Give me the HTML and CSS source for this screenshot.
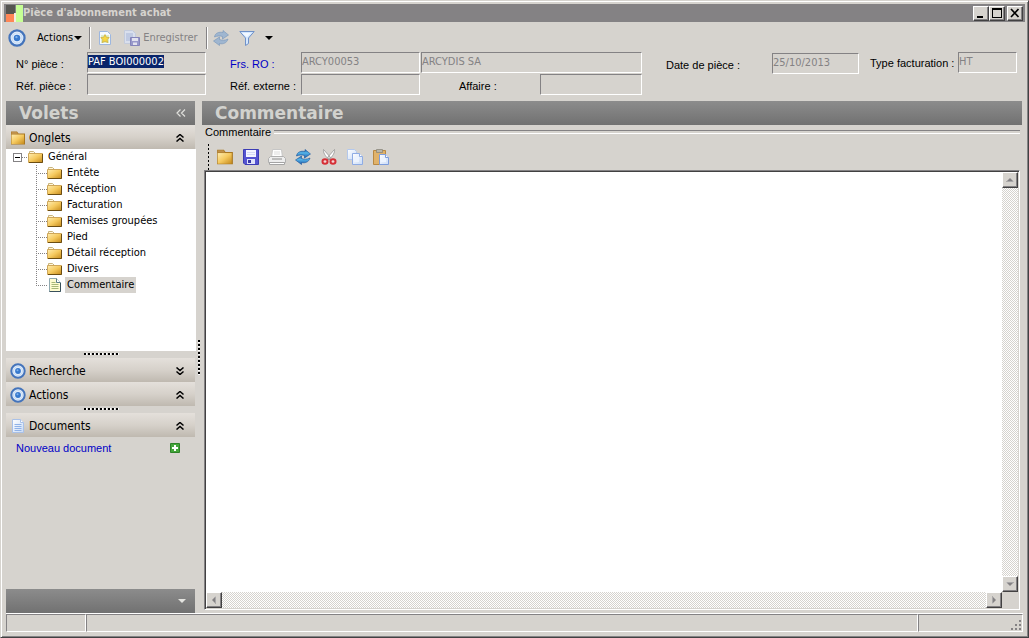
FILE: index.html
```html
<!DOCTYPE html>
<html lang="fr">
<head>
<meta charset="utf-8">
<title>Pièce d'abonnement achat</title>
<link rel="stylesheet" href="styles.css">
</head>
<body>
<svg class="defs" width="0" height="0" aria-hidden="true">
  <defs>
    <linearGradient id="gold" x1="0" y1="0" x2="1" y2="1"><stop offset="0" stop-color="#ffedb0"/><stop offset=".5" stop-color="#f5c95e"/><stop offset="1" stop-color="#c58a1c"/></linearGradient>
    <linearGradient id="sheet" x1="0" y1="0" x2="1" y2="1"><stop offset="0" stop-color="#fff"/><stop offset="1" stop-color="#c9dbf6"/></linearGradient>
    <linearGradient id="wave" x1="0" y1="0" x2="0" y2="1"><stop offset="0" stop-color="#1c62ae"/><stop offset=".4" stop-color="#56b4e8"/><stop offset="1" stop-color="#1a5cae"/></linearGradient>
    <symbol id="folder" viewBox="0 0 16 16"><path d="M1.500 4V2.500h4L7 4" fill="#fff7dc" stroke="#c9b47e"/><path d="M.5 4.500h14v9H.5z" fill="url(#gold)" stroke="#cfa75a"/><path d="M1 13.500h13.500V5" fill="none" stroke="#6b4d12"/></symbol>
    <symbol id="bigfolder" viewBox="0 0 16 16"><path d="M1 1.500h6L8.500 3.500H15v11H1z" fill="#a97720"/><path d="M1.500 2h5L8 4H1.500z" fill="#c0914a"/><path d="M1.500 4.500h12.500v9.500H1.500z" fill="url(#gold)"/></symbol>
    <symbol id="target" viewBox="0 0 16 16"><circle cx="8" cy="8" r="6.700" fill="#e4eefb" stroke="#4474bb" stroke-width="2"/><circle cx="8" cy="8" r="4.500" fill="none" stroke="#c4dbf4"/><circle cx="8" cy="8" r="2.900" fill="#3779cd"/><circle cx="7.500" cy="7.300" r="1" fill="#7fb2ec"/></symbol>
    <symbol id="doc" viewBox="0 0 16 16"><path d="M2.500 1.500h8l3 3v10h-11z" fill="url(#sheet)" stroke="#a9c1e8"/><path d="M10.500 1.500v3h3" fill="#fff" stroke="#a9c1e8"/><path d="M4.500 6.500h7M4.500 8.500h7M4.500 10.500h7M4.500 12.500h7" stroke="#8fb2e8"/></symbol>
    <symbol id="note" viewBox="0 0 16 16"><path d="M2.500 1.500h7l4 4v9h-11z" fill="#fffcd2" stroke="#8fa9b0"/><path d="M9.500 1.500v4h4" fill="#fff" stroke="#5b7c8a"/><path d="M4.500 5.500h4M4.500 7.500h7M4.500 9.500h7M4.500 11.500h7" stroke="#a8b878"/><path d="M13.500 6v8.500h-11" fill="none" stroke="#39505b"/></symbol>
    <symbol id="refresh" viewBox="0 0 16 16"><path d="M1.500 7C2 3 6 1.500 10 2.500V.5l5.500 4.500-6 4V6.500C7 5.500 4 6 1.500 7z"/><path d="M15 9c-1 4-5 5.500-8.500 4.500v2L.5 11l6-4v2.500C9 10.500 12.500 10.500 15 9z"/></symbol>
    <symbol id="chev" viewBox="0 0 8 8"><path d="M.5 3.500 4 .5l3.500 3M.5 7.500 4 4.500l3.500 3" fill="none" stroke="#000" stroke-width="1.500"/></symbol>
    <symbol id="up" viewBox="0 0 8 4"><path d="M0 4 4 0l4 4z" fill="#848284"/><path d="M1 4h7" stroke="#fff" stroke-width=".6"/></symbol>
  </defs>
</svg>
<div class="window">
  <header class="titlebar">
    <svg class="logo" viewBox="0 0 17 17"><path d="M0 0h9v9H0z" fill="#555550"/><path d="M0 9h9v8H0z" fill="#ff8655"/><path d="M10 0h7v17h-7z" fill="#c6ff94"/><path d="M8 8h2v9H8z" fill="#f5ebe0"/></svg>
    <h1>Pièce d'abonnement achat</h1>
    <div class="winbtns">
      <button class="raised" aria-label="Réduire"><svg viewBox="0 0 12 10"><path d="M2 8h6v2H2z"/></svg></button>
      <button class="raised" aria-label="Agrandir"><svg viewBox="0 0 12 10"><path d="M1 0h10v10H1zM2 2v7h8V2z" fill-rule="evenodd"/></svg></button>
      <button class="raised close" aria-label="Fermer"><svg viewBox="0 0 12 10"><path d="m2 1 7.500 8M9.500 1 2 9" stroke="#000" stroke-width="1.700"/></svg></button>
    </div>
  </header>

  <nav class="toolbar">
    <svg class="ic18"><use href="#target"/></svg>
    <button class="menu">Actions <i class="caret"></i></button>
    <i class="sep"></i>
    <button class="flat" aria-label="Nouveau"><svg class="ic16" viewBox="0 0 16 16"><path d="M2.500 1.500h8l3 3v10h-11z" fill="#f5f9ff" stroke="#9db7df"/><path d="M4 5h8v8H4z" fill="#dcebc9"/><path d="m8 4.500 1.300 2.700 3 .4-2.200 2 .6 3L8 11.200l-2.700 1.400.6-3-2.200-2 3-.4z" fill="#f6d744" stroke="#c8a22b" stroke-width=".6"/></svg></button>
    <button class="save" disabled><svg class="ic18" viewBox="0 0 18 18"><path d="M1.500 1.500h8l3 3v10h-11z" fill="#d9dfed" stroke="#c3cbdc"/><path d="M3 5h7M3 7h7M3 9h7M3 11h4" stroke="#a5b4d7"/><path d="M7.500 8.500h9v8h-9z" fill="#9898ca" stroke="#8484ba"/><path d="M9 9h6v3H9zM10 13.500h4V16h-4z" fill="#e2e2ef"/></svg>Enregistrer</button>
    <i class="sep"></i>
    <button class="flat" aria-label="Actualiser"><svg class="ic16" fill="#9fb6d0" stroke="#7593b8" stroke-width=".6"><use href="#refresh"/></svg></button>
    <button class="flat filter" aria-label="Filtrer"><svg class="ic16" viewBox="0 0 16 16"><path d="M.8 1.500h14.400L9.500 8v5.500l-3 2V8z" fill="#d5e8ff" stroke="#6f91c8"/><path d="M3 3h9L8 7z" fill="#f3f9ff"/></svg></button>
    <button class="flat" aria-label="Plus d'options"><i class="caret"></i></button>
  </nav>

  <form class="fields">
    <div class="grid">
      <label for="num">N° pièce :</label>
      <input id="num" value="PAF BOI000002">
      <label for="frs" class="blue">Frs. RO :</label>
      <input id="frs" value="ARCY00053" disabled>
      <input class="wide" value="ARCYDIS SA" aria-label="Nom fournisseur" disabled>
      <label for="ref">Réf. pièce :</label>
      <input id="ref" disabled>
      <label for="ext">Réf. externe :</label>
      <input id="ext" disabled>
      <label for="aff" class="affaire">Affaire :</label>
      <input id="aff" disabled>
    </div>
    <div class="pair"><label for="date">Date de pièce :</label><input id="date" value="25/10/2013" disabled></div>
    <div class="pair type"><label for="type">Type facturation :</label><input id="type" value="HT" disabled></div>
  </form>

  <div class="body">
    <aside class="side">
      <div class="bar"><h2>Volets</h2><button class="flat" aria-label="Replier"><svg class="collapse" viewBox="0 0 10 8"><path d="M4.500.5 1 4l3.500 3.500M9 .5 5.500 4 9 7.500" fill="none" stroke="#e0e0dc" stroke-width="1.200"/></svg></button></div>
      <button class="section"><svg class="ic16"><use href="#bigfolder"/></svg><span>Onglets</span><svg class="chev"><use href="#chev"/></svg></button>
      <div class="tree">
        <div class="root"><button class="minus" aria-label="Replier Général"></button><i class="dots"></i><svg class="ic16"><use href="#folder"/></svg><span>Général</span></div>
        <ul>
          <li><svg class="ic16"><use href="#folder"/></svg><span>Entête</span></li>
          <li><svg class="ic16"><use href="#folder"/></svg><span>Réception</span></li>
          <li><svg class="ic16"><use href="#folder"/></svg><span>Facturation</span></li>
          <li><svg class="ic16"><use href="#folder"/></svg><span>Remises groupées</span></li>
          <li><svg class="ic16"><use href="#folder"/></svg><span>Pied</span></li>
          <li><svg class="ic16"><use href="#folder"/></svg><span>Détail réception</span></li>
          <li><svg class="ic16"><use href="#folder"/></svg><span>Divers</span></li>
          <li class="current"><svg class="ic16"><use href="#note"/></svg><span>Commentaire</span></li>
        </ul>
      </div>
      <div class="hsplit"><i></i></div>
      <button class="section"><svg class="ic16"><use href="#target"/></svg><span>Recherche</span><svg class="chev down"><use href="#chev"/></svg></button>
      <button class="section"><svg class="ic16"><use href="#target"/></svg><span>Actions</span><svg class="chev"><use href="#chev"/></svg></button>
      <div class="hsplit"><i></i></div>
      <button class="section"><svg class="ic16"><use href="#doc"/></svg><span>Documents</span><svg class="chev"><use href="#chev"/></svg></button>
      <div class="newdoc"><a href="#">Nouveau document</a><button class="flat" aria-label="Ajouter"><svg class="add" viewBox="0 0 10 10"><path d="M.5.5h9v9h-9z" fill="#44a63a" stroke="#2d8227"/><path d="M5 2v6M2 5h6" stroke="#fff" stroke-width="2"/></svg></button></div>
      <div class="bar foot"><button class="flat" aria-label="Configurer"><i class="caret light"></i></button></div>
    </aside>
    <div class="vsplit"><i></i></div>
    <main class="main">
      <div class="bar"><h2>Commentaire</h2></div>
      <section class="group">
        <h3>Commentaire</h3>
        <div class="tools">
          <i class="grip"></i>
          <button class="flat" aria-label="Ouvrir"><svg class="ic18" viewBox="0 0 16 16"><use href="#bigfolder"/></svg></button>
          <button class="flat" aria-label="Enregistrer"><svg class="ic18" viewBox="0 0 18 18"><path d="M1.500 1.500h15v15H3l-1.500-1.500z" fill="#5454d0" stroke="#3c3cb4"/><path d="M4 2h10v7H4z" fill="#f4f5ff"/><path d="M5 4.500h8M5 6.500h8" stroke="#d4d9f6"/><path d="M5 11h8v5H5z" fill="#dfe2fa"/><path d="M6 12h3v3H6z" fill="#3838a8"/></svg></button>
          <button class="flat" aria-label="Imprimer"><svg class="ic18" viewBox="0 0 18 18"><path d="M4.500 1.500h9l1 8h-11z" fill="#fff" stroke="#c6c6c6"/><path d="M6 4h6M6 6h6" stroke="#dcdcdc"/><path d="m.5 10.500 2-2h13l2 2v4h-17z" fill="#ededed" stroke="#b0b0b0"/><path d="M4 11h10" stroke="#8c8c8c"/><path d="M1.500 14.500h15v2h-15z" fill="#fff" stroke="#a4a4a4"/></svg></button>
          <button class="flat" aria-label="Actualiser"><svg class="ic16" fill="url(#wave)" stroke="#16539a" stroke-width=".6"><use href="#refresh"/></svg></button>
          <button class="flat" aria-label="Couper"><svg class="ic16" viewBox="0 0 16 16"><path d="M2.500.5C2 3.500 4 6.500 8 11l1.500-2.500zM13.500.5c.5 3-1.500 6-5.500 10.500L6.500 8.500z" fill="#fff" stroke="#949494" stroke-width=".8"/><ellipse cx="4" cy="12.500" rx="2.500" ry="2.200" fill="#f4d6d6" stroke="#d52f36" stroke-width="2"/><ellipse cx="12" cy="12.500" rx="2.500" ry="2.200" fill="#f4d6d6" stroke="#d52f36" stroke-width="2"/></svg></button>
          <button class="flat" aria-label="Copier"><svg class="ic16" viewBox="0 0 16 16"><path d="M.5.500h7l2 2v8h-9z" fill="url(#sheet)" stroke="#b4c8ec"/><path d="M5.500 4.500h7l3 3v8h-10z" fill="url(#sheet)" stroke="#8facE4"/><path d="M12.500 4.500v3h3" fill="#fff" stroke="#8face4"/><path d="M7 8h5v5H7z" fill="#edf4ff"/></svg></button>
          <button class="flat" aria-label="Coller"><svg class="ic16" viewBox="0 0 16 16"><path d="M.5 1.500h12v14H.5z" fill="#e0b26a" stroke="#b88842"/><path d="M3.500.5h6v3h-6z" fill="#b9b5a8" stroke="#858176" stroke-width=".7"/><path d="M6.500 5.500h6l3 3v7h-9z" fill="url(#sheet)" stroke="#7c9cdc"/><path d="M12.500 5.500v3h3" fill="#fff" stroke="#7c9cdc"/><path d="M8 9h5v4H8z" fill="#edf4ff"/></svg></button>
        </div>
        <div class="editor">
          <textarea aria-label="Commentaire"></textarea>
          <div class="track vert"><button class="raised" aria-label="Haut"><svg class="arr"><use href="#up"/></svg></button><button class="raised" aria-label="Bas"><svg class="arr d"><use href="#up"/></svg></button></div>
          <div class="track horiz"><button class="raised" aria-label="Gauche"><svg class="arr l"><use href="#up"/></svg></button><button class="raised" aria-label="Droite"><svg class="arr r"><use href="#up"/></svg></button></div>
        </div>
      </section>
    </main>
  </div>

  <footer class="status"><span></span><span></span><span><svg class="sizer" viewBox="0 0 12 12"><path d="M9 1h2v2H9zM5 5h2v2H5zM9 5h2v2H9zM1 9h2v2H1zM5 9h2v2H5zM9 9h2v2H9z" fill="#848284"/></svg></span></footer>
</div>
<script src="script.js"></script>
</body>
</html>
```
FILE: styles.css
```css
* { box-sizing: border-box; }
:root {
  --face: #d6d3ce;
  --shadow: #848284;
  --dark: #424142;
  --ui: "DejaVu Sans Condensed", "DejaVu Sans", sans-serif;
  --label: "Liberation Sans", Arial, sans-serif;
}
body { margin: 0; font: 11px/16px var(--ui); color: #000; background: var(--face); }
.defs { position: absolute; }
svg { display: block; flex: none; }
button { font: inherit; color: inherit; margin: 0; padding: 0; border: 0; background: none; border-radius: 0; }
h1, h2, h3, ul { margin: 0; padding: 0; }
.ic16 { width: 16px; height: 16px; }
.ic18 { width: 18px; height: 18px; }
.flat { display: flex; align-items: center; }

.window {
  min-height: 100vh; display: flex; flex-direction: column;
  padding: 2px 3px 3px 3px; background: var(--face);
  border: 1px solid; border-color: var(--face) var(--dark) var(--dark) var(--face);
  box-shadow: inset 1px 1px #fff, inset -1px -1px var(--shadow);
}
.titlebar { display: flex; align-items: center; height: 18px; padding: 0 2px; background: var(--shadow); margin-top: 1px; }
.logo { width: 17px; height: 17px; }
.titlebar h1 { flex: 1; font: bold 11px/16px "DejaVu Sans Condensed", "DejaVu Sans", sans-serif; color: var(--face); }
.winbtns { display: flex; }
.raised {
  display: flex; align-items: center; justify-content: center; background: var(--face);
  width: 16px; height: 15px; border: 1px solid; border-color: #fff var(--dark) var(--dark) #fff;
  box-shadow: inset -1px -1px var(--shadow);
}
.winbtns svg { width: 12px; height: 10px; }
.close { margin-left: 2px; }

.toolbar { display: flex; align-items: center; height: 29px; padding: 3px 4px 0; }
.caret { display: inline-block; border: 4px solid transparent; border-top-color: #000; border-bottom: 0; }
.caret.light { border-top-color: #e4e4e0; }
.menu { display: flex; align-items: center; gap: 1px; margin-left: 11px; }
.sep { width: 2px; height: 22px; margin: 0 6px 0 7px; border-left: 1px solid var(--shadow); border-right: 1px solid #fff; }
.save { display: flex; align-items: center; gap: 2px; margin-left: 10px; color: var(--shadow); }
.save + .sep { margin: 0 5px 0 8px; }
.filter { margin: 0 10px; }

.fields { display: flex; align-items: flex-start; padding: 1px 4px 0 12px; font-family: var(--label); }
.grid { display: grid; grid-template-columns: 71px 119px 24px 71px 119px 39px 81px 102px; row-gap: 1px; align-items: center; }
.grid label { padding-top: 2px; }
.grid label[for="frs"], .grid label[for="ext"] { grid-column: 3 / 5; padding-left: 24px; white-space: nowrap; }
.grid .wide { grid-column: 6 / 9; margin-left: 1px; width: auto; }
.affaire { grid-column: 7; }
.blue, a { color: #0000c6; text-decoration: none; }
input {
  width: 100%; min-width: 0; height: 21px; margin: 0; padding: 0 0 3px; font: 11px var(--ui); color: #000;
  background: var(--face); border: 1px solid; border-color: var(--shadow) #fff #fff var(--shadow);
  border-radius: 0; outline: 0;
}
input:disabled { color: var(--shadow); }
input::selection { background: #08246b; color: #fff; }
.pair { display: flex; align-items: center; padding-top: 1px; margin-left: 24px; }
.pair label { width: 106px; padding-top: 3px; }
.pair input { width: 87px; }
.type { margin-left: 11px; padding-top: 0; }
.type label { width: 88px; padding-top: 0; white-space: nowrap; }
.type input { width: 59px; }

.body { flex: 1; display: flex; padding: 6px 3px 0 2px; }
.side { width: 190px; flex: none; display: flex; flex-direction: column; }
.bar {
  display: flex; align-items: center; justify-content: space-between; height: 24px; flex: none;
  padding: 0 9px 0 13px; background: linear-gradient(#8c8c8c, #717171);
}
.side .bar, .section { margin-right: 1px; }
.bar h2 { font: bold 17px/24px "DejaVu Sans", sans-serif; color: #d2d2ce; }
.bar .collapse { width: 10px; height: 8px; }
.section {
  display: flex; align-items: center; gap: 3px; height: 24px; padding: 1px 11px 0 4px; flex: none;
  font-size: 12px; text-align: left; background: linear-gradient(#e4e0db, #d6d1ca 50%, #bfb9b0);
}
.section span { flex: 1; }
.chev { width: 8px; height: 8px; }
.down { transform: rotate(180deg); }
.tree { background: #fff; height: 202px; padding-left: 7px; }
.root { display: flex; align-items: center; height: 16px; }
.minus { width: 9px; height: 9px; border: 1px solid var(--shadow); background: linear-gradient(#000, #000) center / 5px 1px no-repeat; }
.dots { width: 6px; height: 1px; background: repeating-linear-gradient(90deg, #848284 0 1px, #fff 1px 2px); }
.root span { margin-left: 4px; }
.tree ul { list-style: none; margin-left: 23px; }
.tree li {
  display: flex; align-items: center; height: 16px; padding-left: 11px;
  background:
    repeating-linear-gradient(90deg, #848284 0 1px, #fff 1px 2px) 0 8px / 11px 1px no-repeat,
    repeating-linear-gradient(#848284 0 1px, #fff 1px 2px) 0 0 / 1px 100% no-repeat;
}
.tree li:last-child { background-size: 11px 1px, 1px 8px; }
.tree li span { margin-left: 2px; padding: 0 2px; line-height: 16px; }
.current span { background: var(--face); }
.hsplit { height: 7px; display: flex; justify-content: center; align-items: flex-start; padding-top: 2px; }
.hsplit i { width: 35px; height: 2px; background: repeating-linear-gradient(90deg, #000 0 2px, #fff 2px 3px, var(--face) 3px 4px); }
.vsplit { width: 6px; flex: none; display: flex; justify-content: center; align-items: center; }
.vsplit i { width: 2px; height: 35px; background: repeating-linear-gradient(#000 0 2px, #fff 2px 3px, var(--face) 3px 4px); }
.newdoc { display: flex; align-items: center; justify-content: space-between; padding: 3px 16px 0 10px; font-family: var(--label); }
.add { width: 10px; height: 10px; }
.foot { margin-top: auto; justify-content: flex-end; }

.main { flex: 1; min-width: 0; display: flex; flex-direction: column; }
.group { flex: 1; display: flex; flex-direction: column; padding: 0 2px 3px; }
.group h3 { display: flex; align-items: center; gap: 3px; padding-left: 1px; font: 11px/14px var(--label); }
.group h3::after { content: ""; flex: 1; height: 2px; border-top: 1px solid var(--shadow); border-bottom: 1px solid #fff; }
.tools { display: flex; align-items: center; gap: 10px; height: 31px; padding: 5px 0 0 4px; }
.tools .flat { width: 16px; justify-content: center; }
.grip { width: 1px; height: 26px; margin-right: -2px; background: repeating-linear-gradient(#000 0 2px, var(--face) 2px 4px); }
.editor {
  flex: 1; display: grid; grid-template: 1fr 16px / 1fr 16px;
  border: 1px solid; border-color: var(--shadow) #fff #fff var(--shadow);
  box-shadow: inset 1px 1px var(--dark); padding: 1px;
}
textarea { width: 100%; height: 100%; border: 0; margin: 0; padding: 2px; resize: none; outline: 0; background: #fff; font: 11px var(--ui); overflow: hidden; }
.track { display: flex; justify-content: space-between; background: repeating-conic-gradient(#fff 0 25%, var(--face) 0 50%) 0 0 / 2px 2px; }
.track .raised { width: 16px; height: 16px; }
.vert { flex-direction: column; }
.arr { width: 8px; height: 4px; }
.d { transform: rotate(180deg); }
.l { transform: rotate(-90deg); }
.r { transform: rotate(90deg); }

.status { display: grid; grid-template-columns: 80px 1fr 105px; height: 19px; margin: 0 2px 2px; border-top: 1px solid #fff; }
.status span { display: flex; justify-content: flex-end; align-items: flex-end; border: 1px solid; border-color: var(--shadow) #fff #fff var(--shadow); }
.sizer { width: 12px; height: 12px; }
```
FILE: script.js
```js
const number = document.getElementById("num");
number.focus();
number.select();
```
